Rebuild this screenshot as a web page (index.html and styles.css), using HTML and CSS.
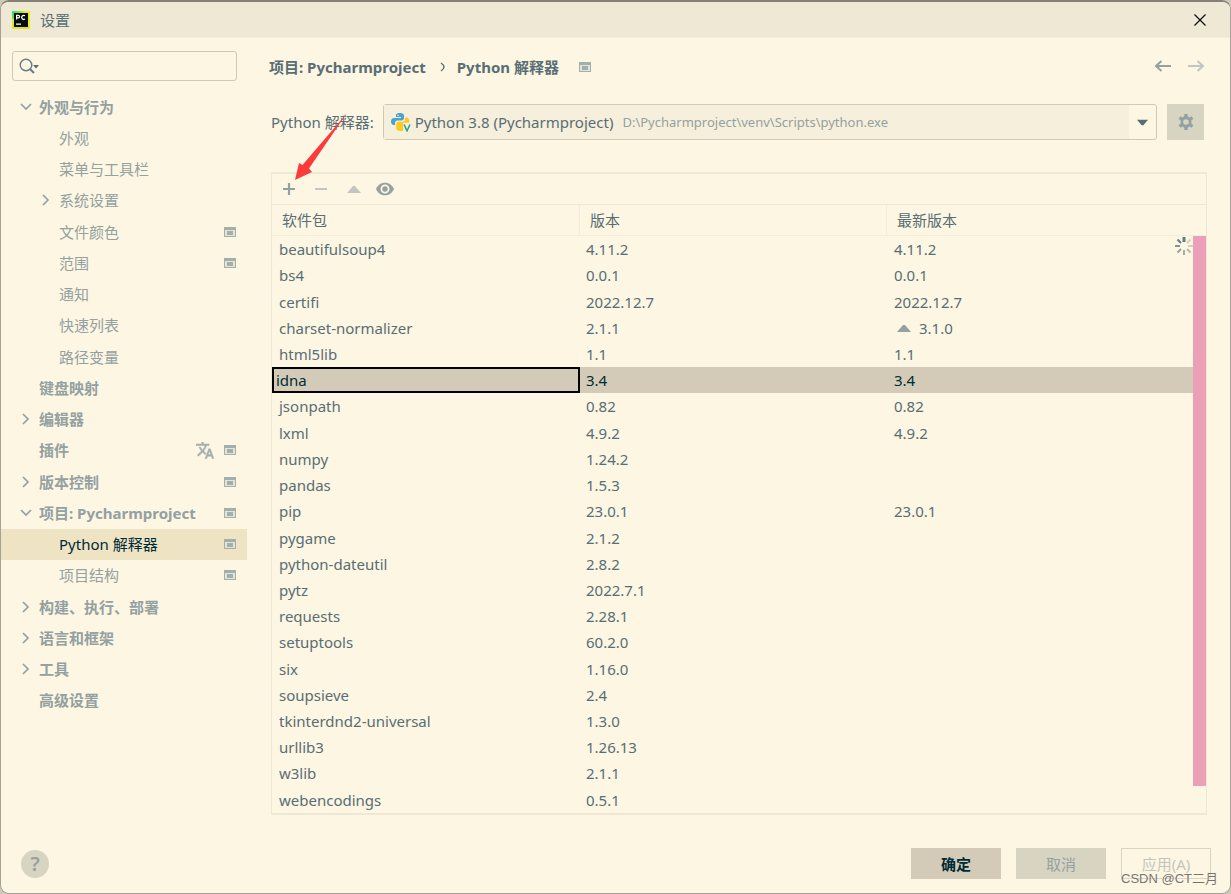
FILE: index.html
```html
<!DOCTYPE html>
<html lang="zh-CN">
<head>
<meta charset="utf-8">
<title>设置</title>
<link rel="stylesheet" href="styles.css">
</head>
<body>
<svg class="defs" aria-hidden="true">
  <symbol id="proj" viewBox="0 0 12 10"><path d="M0 0h12v10H0zM1 3v6h10V3z" fill="#a3afac" fill-rule="evenodd"/><path d="M1 3h10v6H1z" fill="#e5e5d5"/><path d="M3 4h6v4H3z" fill="#a3afac"/></symbol>
  <symbol id="right" viewBox="0 0 12 12"><path d="M3 1l5 5-5 5" fill="none" stroke="#93a1a1" stroke-width="1.7"/></symbol>
  <symbol id="down" viewBox="0 0 12 12"><path d="M1 3l5 5 5-5" fill="none" stroke="#93a1a1" stroke-width="1.7"/></symbol>
</svg>
<div class="window">
  <header class="titlebar">
    <svg class="logo" viewBox="0 0 18 18"><defs><linearGradient id="lg" x1="0" y1="0" x2="1" y2="0.6"><stop offset="0" stop-color="#21d789"/><stop offset=".3" stop-color="#7be535"/><stop offset=".6" stop-color="#e8ec2c"/></linearGradient></defs><path d="M0 0h18v18H0z" fill="url(#lg)"/><path d="M0 8h3v10H0zM0 15h17v3H0z" fill="#e3e329"/><path d="M2 2h14v14H2z" fill="#060c08"/><path d="M4 13.2h5" stroke="#fff" stroke-width="1.2"/><path d="M4.6 8.500V4.300h1.700a1.300 1.300 0 0 1 0 2.600H4.600M13 4.900a2 2 0 1 0 0 3" fill="none" stroke="#fff" stroke-width="1.200"/></svg>
    <h1>设置</h1>
    <button class="close" aria-label="关闭"><svg viewBox="0 0 12 12"><path d="M.5.5l11 11M11.500.5l-11 11" stroke="#111" stroke-width="1.300"/></svg></button>
  </header>
  <div class="content">
    <aside class="sidebar">
      <label class="search">
        <svg viewBox="0 0 22 18"><circle cx="7" cy="8" r="5.800" fill="none" stroke="#657b83" stroke-width="1.400"/><path d="M11 12l4 4" stroke="#657b83" stroke-width="2"/><path d="M14 8h6l-3 3.500z" fill="#586e75"/></svg>
        <input type="text" aria-label="搜索设置">
      </label>
      <ul class="tree">
        <li class="top"><svg class="tw"><use href="#down"/></svg><span>外观与行为</span></li>
        <li class="sub"><span>外观</span></li>
        <li class="sub"><span>菜单与工具栏</span></li>
        <li class="sub"><svg class="tw"><use href="#right"/></svg><span>系统设置</span></li>
        <li class="sub"><span>文件颜色</span><svg class="pj"><use href="#proj"/></svg></li>
        <li class="sub"><span>范围</span><svg class="pj"><use href="#proj"/></svg></li>
        <li class="sub"><span>通知</span></li>
        <li class="sub"><span>快速列表</span></li>
        <li class="sub"><span>路径变量</span></li>
        <li class="top"><span>键盘映射</span></li>
        <li class="top"><svg class="tw"><use href="#right"/></svg><span>编辑器</span></li>
        <li class="top"><span>插件</span><svg class="lang" viewBox="1 2 22 20"><path fill="#a3afac" stroke="#a3afac" stroke-width=".6" d="M12.870 15.070l-2.540-2.510.03-.03A17.520 17.520 0 0 0 14.070 6H17V4h-7V2H8v2H1v2h11.170C11.500 7.920 10.440 9.750 9 11.350 8.070 10.320 7.300 9.190 6.690 8h-2c.73 1.630 1.730 3.170 2.980 4.560l-5.090 5.020L4 19l5-5 3.110 3.110.76-2.040zM18.500 10h-2L12 22h2l1.120-3h4.750L21 22h2l-4.500-12zm-2.620 7l1.620-4.330L19.120 17h-3.240z"/></svg><svg class="pj"><use href="#proj"/></svg></li>
        <li class="top"><svg class="tw"><use href="#right"/></svg><span>版本控制</span><svg class="pj"><use href="#proj"/></svg></li>
        <li class="top"><svg class="tw"><use href="#down"/></svg><span>项目: Pycharmproject</span><svg class="pj"><use href="#proj"/></svg></li>
        <li class="sub current"><span>Python 解释器</span><svg class="pj"><use href="#proj"/></svg></li>
        <li class="sub"><span>项目结构</span><svg class="pj"><use href="#proj"/></svg></li>
        <li class="top"><svg class="tw"><use href="#right"/></svg><span>构建、执行、部署</span></li>
        <li class="top"><svg class="tw"><use href="#right"/></svg><span>语言和框架</span></li>
        <li class="top"><svg class="tw"><use href="#right"/></svg><span>工具</span></li>
        <li class="top"><span>高级设置</span></li>
      </ul>
    </aside>
    <main class="main">
      <nav class="crumbs">
        <b>项目: Pycharmproject</b>
        <svg class="sep" viewBox="0 0 6 10"><path d="M1 1q3 2 3 4t-3 4" fill="none" stroke="#586e75" stroke-width="1.400"/></svg>
        <b>Python 解释器</b>
        <svg class="pj"><use href="#proj"/></svg>
        <button class="nav back" aria-label="后退"><svg viewBox="0 0 18 14"><path d="M17 6H2M7.500 1L2 6l5.500 5" fill="none" stroke="#93a1a1" stroke-width="2"/></svg></button>
        <button class="nav" aria-label="前进"><svg viewBox="0 0 18 14"><path d="M1 6h15M10.500 1L16 6l-5.500 5" fill="none" stroke="#c3c5c2" stroke-width="2"/></svg></button>
      </nav>
      <div class="interp">
        <label for="interp">Python 解释器:</label>
        <div class="combo">
          <div class="value">
            <svg viewBox="0 0 20 20"><path d="M8.500 1C5.500 1 5 2.300 5 3.500V5h5v1H3C1.200 6 0 7.300 0 9.500S1.200 13 2.500 13H4v-2c0-1.500 1-2.500 2.500-2.500h4C12 8.500 13 7.500 13 6V3.500C13 2 12 1 8.500 1z" fill="#4ba3d0"/><circle cx="7" cy="3.200" r=".8" fill="#f5efdc"/><path d="M14 5.500h1.500c1.700 0 2.700 1.500 2.700 4v1.200h-5L14.500 18c-1 .8-2.500 1-4.500 1-3.500 0-4.800-1-4.800-2.500V12c0-1.500.8-2.300 2.300-2.300h4.200c1.500 0 2.300-1 2.300-2.400z" fill="#fdcb20"/><path d="M12 11h8v9h-8z" fill="#f5efdc"/><path d="M13 12.500l3 6.300 3-6.300" fill="none" stroke="#2c9c94" stroke-width="1.500"/></svg>
            <span>Python 3.8 (Pycharmproject)</span><small>D:\Pycharmproject\venv\Scripts\python.exe</small>
          </div>
          <div class="drop"><svg viewBox="0 0 12 7"><path d="M0 .5h12L7 6.500H5z" fill="#586e75"/></svg></div>
          <select id="interp"><option>Python 3.8 (Pycharmproject)</option></select>
        </div>
        <button class="gear" aria-label="解释器设置"><svg viewBox="0 0 16 16"><path fill="#93a1a1" fill-rule="evenodd" d="M6.300 0h3.400v2.300l1.900 1.100 2-1.200L15.400 5l-2 1.200v3.600l2 1.200-1.800 2.800-2-1.200-1.900 1.100V16H6.300v-2.300l-1.900-1.100-2 1.200L.6 11l2-1.200V6.200L.6 5l1.800-2.800 2 1.200 1.900-1.100zM8 5.200a2.800 2.800 0 1 0 0 5.600 2.800 2.800 0 0 0 0-5.600z"/></svg></button>
      </div>
      <section class="packages">
        <div class="tools">
          <button aria-label="安装"><svg viewBox="0 0 18 14"><path d="M9 1v12M3 7h12" stroke="#93a1a1" stroke-width="2.200"/></svg></button>
          <button aria-label="卸载"><svg viewBox="0 0 18 14"><path d="M3 7h12" stroke="#c3c5c2" stroke-width="2.200"/></svg></button>
          <button aria-label="升级"><svg viewBox="0 0 18 14"><path d="M3 11l6-7h2l6 7z" fill="#c3c5c2"/></svg></button>
          <button aria-label="显示早期版本"><svg viewBox="0 0 18 14"><path fill="#93a1a1" fill-rule="evenodd" d="M0 7c2-4.300 5.200-6.300 9-6.300S16 2.700 18 7c-2 4.300-5.200 6.300-9 6.300S2 11.300 0 7zM9 2.500a4.500 4.500 0 1 0 0 9 4.500 4.500 0 0 0 0-9z"/><circle cx="9" cy="7" r="2.700" fill="#93a1a1"/></svg></button>
        </div>
        <div class="grid">
          <table>
            <colgroup><col class="c1"><col class="c2"><col></colgroup>
            <thead><tr><th>软件包</th><th>版本</th><th>最新版本</th></tr></thead>
            <tbody>
              <tr><td>beautifulsoup4</td><td>4.11.2</td><td>4.11.2</td></tr>
              <tr><td>bs4</td><td>0.0.1</td><td>0.0.1</td></tr>
              <tr><td>certifi</td><td>2022.12.7</td><td>2022.12.7</td></tr>
              <tr><td>charset-normalizer</td><td>2.1.1</td><td><svg class="up" viewBox="0 0 14 8"><path d="M0 8l6-7h2l6 7z" fill="#93a1a1"/></svg>3.1.0</td></tr>
              <tr><td>html5lib</td><td>1.1</td><td>1.1</td></tr>
              <tr class="selected"><td>idna</td><td>3.4</td><td>3.4</td></tr>
              <tr><td>jsonpath</td><td>0.82</td><td>0.82</td></tr>
              <tr><td>lxml</td><td>4.9.2</td><td>4.9.2</td></tr>
              <tr><td>numpy</td><td>1.24.2</td><td></td></tr>
              <tr><td>pandas</td><td>1.5.3</td><td></td></tr>
              <tr><td>pip</td><td>23.0.1</td><td>23.0.1</td></tr>
              <tr><td>pygame</td><td>2.1.2</td><td></td></tr>
              <tr><td>python-dateutil</td><td>2.8.2</td><td></td></tr>
              <tr><td>pytz</td><td>2022.7.1</td><td></td></tr>
              <tr><td>requests</td><td>2.28.1</td><td></td></tr>
              <tr><td>setuptools</td><td>60.2.0</td><td></td></tr>
              <tr><td>six</td><td>1.16.0</td><td></td></tr>
              <tr><td>soupsieve</td><td>2.4</td><td></td></tr>
              <tr><td>tkinterdnd2-universal</td><td>1.3.0</td><td></td></tr>
              <tr><td>urllib3</td><td>1.26.13</td><td></td></tr>
              <tr><td>w3lib</td><td>2.1.1</td><td></td></tr>
              <tr><td>webencodings</td><td>0.5.1</td><td></td></tr>
            </tbody>
          </table>
          <div class="scrollbar"></div>
          <svg class="spinner" viewBox="-9 -9 18 18" fill="none" stroke-width="2"><path d="M0-4v-5" stroke="#657b83" stroke-width="3"/><path d="M3-3l3.500-3.500" stroke="#d3d2c4"/><path d="M4 0h5" stroke="#cfcfc2"/><path d="M3 3l3.500 3.500" stroke="#b4bab0"/><path d="M0 4v5" stroke="#a3aea9"/><path d="M-3 3l-3.500 3.500" stroke="#93a1a1"/><path d="M-4 0h-5" stroke="#839496"/><path d="M-3-3l-3.500-3.500" stroke="#657b83"/></svg>
        </div>
      </section>
    </main>
  </div>
  <footer class="footer">
    <button class="help" aria-label="帮助">?</button>
    <button class="btn ok">确定</button>
    <button class="btn cancel">取消</button>
    <button class="btn apply" disabled>应用(A)</button>
  </footer>
  <svg class="arrow" viewBox="0 0 54 68" aria-hidden="true"><path d="M53 0L15 55.500l3 3.500L1 67l4-17 3.500 2z" fill="#fb3b3b"/></svg>
  <span class="watermark">CSDN @CT二月</span>
</div>
</body>
</html>
```
FILE: styles.css
```css
* { box-sizing: border-box; }
body {
  margin: 0;
  background: #cfc9b8;
  color: #586e75;
  font: 15px/20px "Noto Sans", "Noto Sans CJK SC", sans-serif;
}
button, input, select { font: inherit; color: inherit; }
button { border: 0; padding: 0; background: none; }
svg { display: block; flex: none; }
.defs { position: absolute; width: 0; height: 0; }
.window {
  position: relative;
  display: flex;
  flex-direction: column;
  min-height: 100vh;
  background: #fdf6e3;
  border: 1px solid #a5a197;
  border-top: 2px solid #858176;
  border-radius: 9px;
  overflow: hidden;
}
.titlebar {
  display: flex;
  align-items: center;
  height: 36px;
  padding: 0 24px 0 11px;
  background: #eee8d5;
  border-bottom: 1px solid #f3ecda;
}
.logo { width: 18px; height: 18px; }
h1 { margin: 0 auto 0 10px; font-size: 15px; font-weight: 400; }
.close svg { width: 12px; height: 12px; }
.content { display: flex; flex: 1; }
.sidebar { width: 246px; padding-top: 13px; }
.search {
  display: flex;
  align-items: center;
  height: 30px;
  margin: 0 10px 0 11px;
  padding: 0 6px;
  border: 1px solid #d0c9b5;
  border-radius: 3px;
}
.search svg { width: 22px; height: 18px; }
.search input { flex: 1; min-width: 0; border: 0; background: none; outline: 0; }
.tree {
  display: flex;
  flex-direction: column;
  height: 625px;
  margin: 10px 0 0;
  padding: 0;
  list-style: none;
  color: #93a1a1;
}
.tree li {
  position: relative;
  display: flex;
  flex: 1;
  align-items: center;
  gap: 10px;
  padding: 0 11px 0 38px;
}
.tree .sub { padding-left: 58px; }
.tree .top { font-weight: 700; }
.tree span { margin-right: auto; white-space: nowrap; }
.tree .current { background: #eee3c3; color: #002b36; }
.tw { position: absolute; left: 19px; width: 12px; height: 12px; }
.sub .tw { left: 39px; }
.pj { width: 12px; height: 10px; }
.lang { width: 18px; height: 17px; }
.main {
  display: flex;
  flex: 1;
  flex-direction: column;
  min-width: 0;
  padding: 14px 23px 0 24px;
}
.crumbs { display: flex; align-items: center; height: 30px; }
.crumbs b { margin-left: -2px; }
.crumbs .sep { width: 6px; height: 10px; margin: 0 13px 0 14px; }
.crumbs .pj { margin-left: 20px; }
.nav { margin-left: 15px; }
.nav.back { margin-left: auto; }
.nav:last-child { margin-right: 2px; }
.nav svg { width: 18px; height: 14px; }
.interp { display: flex; align-items: center; height: 36px; margin: 22px 3px 32px 0; }
.combo {
  position: relative;
  display: flex;
  flex: 1;
  height: 36px;
  margin: 0 10px 0 9px;
  border: 1px solid #d0c9b5;
  border-radius: 3px;
}
.value { display: flex; flex: 1; align-items: center; background: #f6efdc; white-space: nowrap; }
.value svg { width: 20px; height: 20px; margin: 0 4px 0 7px; }
.value small { margin-left: 9px; font-size: 13px; color: #93a1a1; }
.drop { display: flex; align-items: center; width: 27px; padding-left: 8px; }
.drop svg { width: 11px; height: 7px; }
.combo select { position: absolute; inset: 0; width: 100%; opacity: 0; }
.gear { display: flex; align-items: center; justify-content: center; width: 37px; height: 36px; background: #d8d4c2; }
.gear svg { width: 16px; height: 16px; }
.packages { border: 1px solid #eee8d5; border-width: 2px 1px; }
.tools { display: flex; align-items: center; gap: 14px; height: 30px; padding-left: 8px; }
.tools svg { width: 18px; height: 14px; }
.grid { position: relative; border-top: 1px solid #eee8d5; }
table { width: 100%; height: 608px; border-collapse: separate; border-spacing: 0; table-layout: fixed; }
.c1 { width: 308px; }
.c2 { width: 307px; }
th, td { padding: 0 0 0 7px; text-align: left; font-weight: 400; white-space: nowrap; }
td:nth-child(2) { padding-left: 6px; }
th { height: 31px; padding-left: 10px; border-bottom: 1px solid #f3ecda; border-right: 1px solid #f3ecda; }
th:last-child { border-right: 0; }
.up { display: inline-block; width: 14px; height: 8px; margin: 0 8px 2px 3px; }
.selected { background: #d3cbb7; color: #002b36; }
.selected td:first-child { padding-left: 4px; box-shadow: inset 0 0 0 2px #000; }
.scrollbar { position: absolute; top: 31px; right: 0; width: 13px; height: 550px; background: #eba0b8; }
.spinner { position: absolute; top: 32px; right: 13px; width: 18px; height: 18px; }
.footer { display: flex; align-items: center; gap: 15px; padding: 33px 19px 14px 20px; }
.help {
  width: 28px;
  height: 28px;
  margin-right: auto;
  border-radius: 50%;
  background: #d8d4c2;
  color: #93a1a1;
  font-size: 20px;
  font-weight: 600;
}
.btn { width: 90px; height: 31px; }
.ok { background: #d3cbb7; color: #002b36; font-weight: 700; }
.cancel { background: #d8d4c2; color: #93a1a1; }
.apply { border: 1px solid #d8d4c2; color: #c3c5bd; }
.arrow { position: absolute; left: 293px; top: 111px; width: 54px; height: 68px; }
.watermark {
  position: absolute;
  right: 12px;
  bottom: 4px;
  color: #77746b;
  font: 13px/20px "Liberation Sans", "Noto Sans CJK SC", sans-serif;
  text-shadow: 0 0 1px #fff;
}
```
